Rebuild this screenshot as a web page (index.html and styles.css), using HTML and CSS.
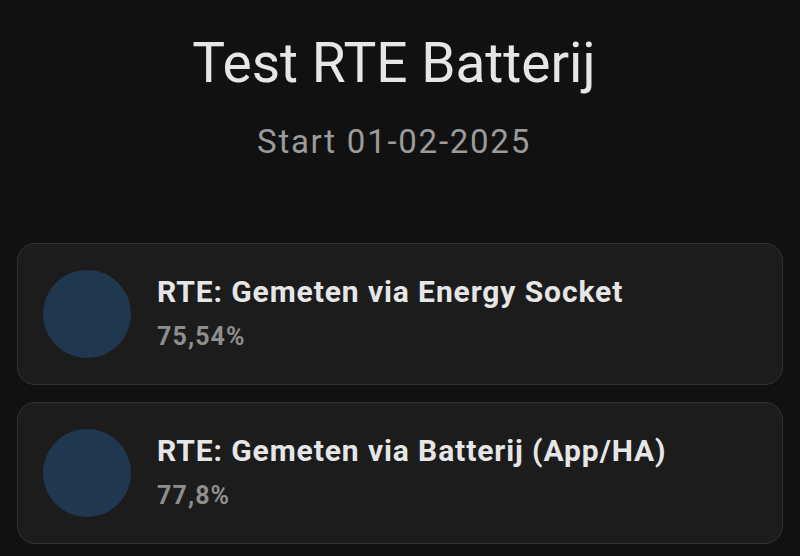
FILE: index.html
```html
<!DOCTYPE html>
<html lang="nl">
<head>
    <meta charset="UTF-8">
    <meta name="viewport" content="width=device-width, initial-scale=1.0">
    <title>Test RTE Batterij</title>
    <link rel="stylesheet" href="styles.css">
</head>
<body>
    <!-- Header -->
    <header class="page-header">
        <h1 class="page-title">Test RTE Batterij</h1>
        <p class="page-subtitle">Start 01-02-2025</p>
    </header>

    <!-- Result cards -->
    <main class="cards">
        <div class="card">
            <div class="card-icon"></div>
            <div class="card-info">
                <div class="card-name">RTE: Gemeten via Energy Socket</div>
                <div class="card-value">75,54%</div>
            </div>
        </div>

        <div class="card">
            <div class="card-icon"></div>
            <div class="card-info">
                <div class="card-name">RTE: Gemeten via Batterij (App/HA)</div>
                <div class="card-value">77,8%</div>
            </div>
        </div>
    </main>
</body>
</html>
```

FILE: styles.css
```css
/* Reset */
body, h1, p {
    margin: 0;
    padding: 0;
    box-sizing: border-box;
}

body {
    font-family: Roboto, "Noto Sans", sans-serif;
    background-color: #111111;
    color: #e8e8e8;
    min-height: 100vh;
    overflow: hidden;
}

/* Header */
.page-header {
    text-align: center;
    padding: 30px 12px 0 0;
}

.page-title {
    font-size: 55px;
    font-weight: 400;
    line-height: 66px;
    color: #e6e6e6;
}

.page-subtitle {
    margin-top: 26px;
    font-size: 33px;
    line-height: 40px;
    letter-spacing: 1.75px;
    color: #9b9b9b;
}

/* Cards */
.cards {
    display: flex;
    flex-direction: column;
    gap: 17px;
    padding: 81px 17px 0 17px;
}

.card {
    display: flex;
    align-items: center;
    gap: 26px;
    height: 142px;
    padding: 0 25px;
    background-color: #1c1c1c;
    border: 1px solid #333333;
    border-radius: 18px;
    box-sizing: border-box;
}

.card-icon {
    width: 88px;
    height: 88px;
    flex-shrink: 0;
    border-radius: 50%;
    background-color: #1f3850;
}

.card-info {
    display: flex;
    flex-direction: column;
    gap: 12px;
    padding-bottom: 2px;
}

.card-name {
    font-size: 30px;
    font-weight: 700;
    line-height: 36px;
    letter-spacing: 0.9px;
    color: #e6e6e6;
}

.card-value {
    font-size: 25px;
    font-weight: 700;
    line-height: 30px;
    letter-spacing: 1.1px;
    color: #8e8e8e;
}
```
